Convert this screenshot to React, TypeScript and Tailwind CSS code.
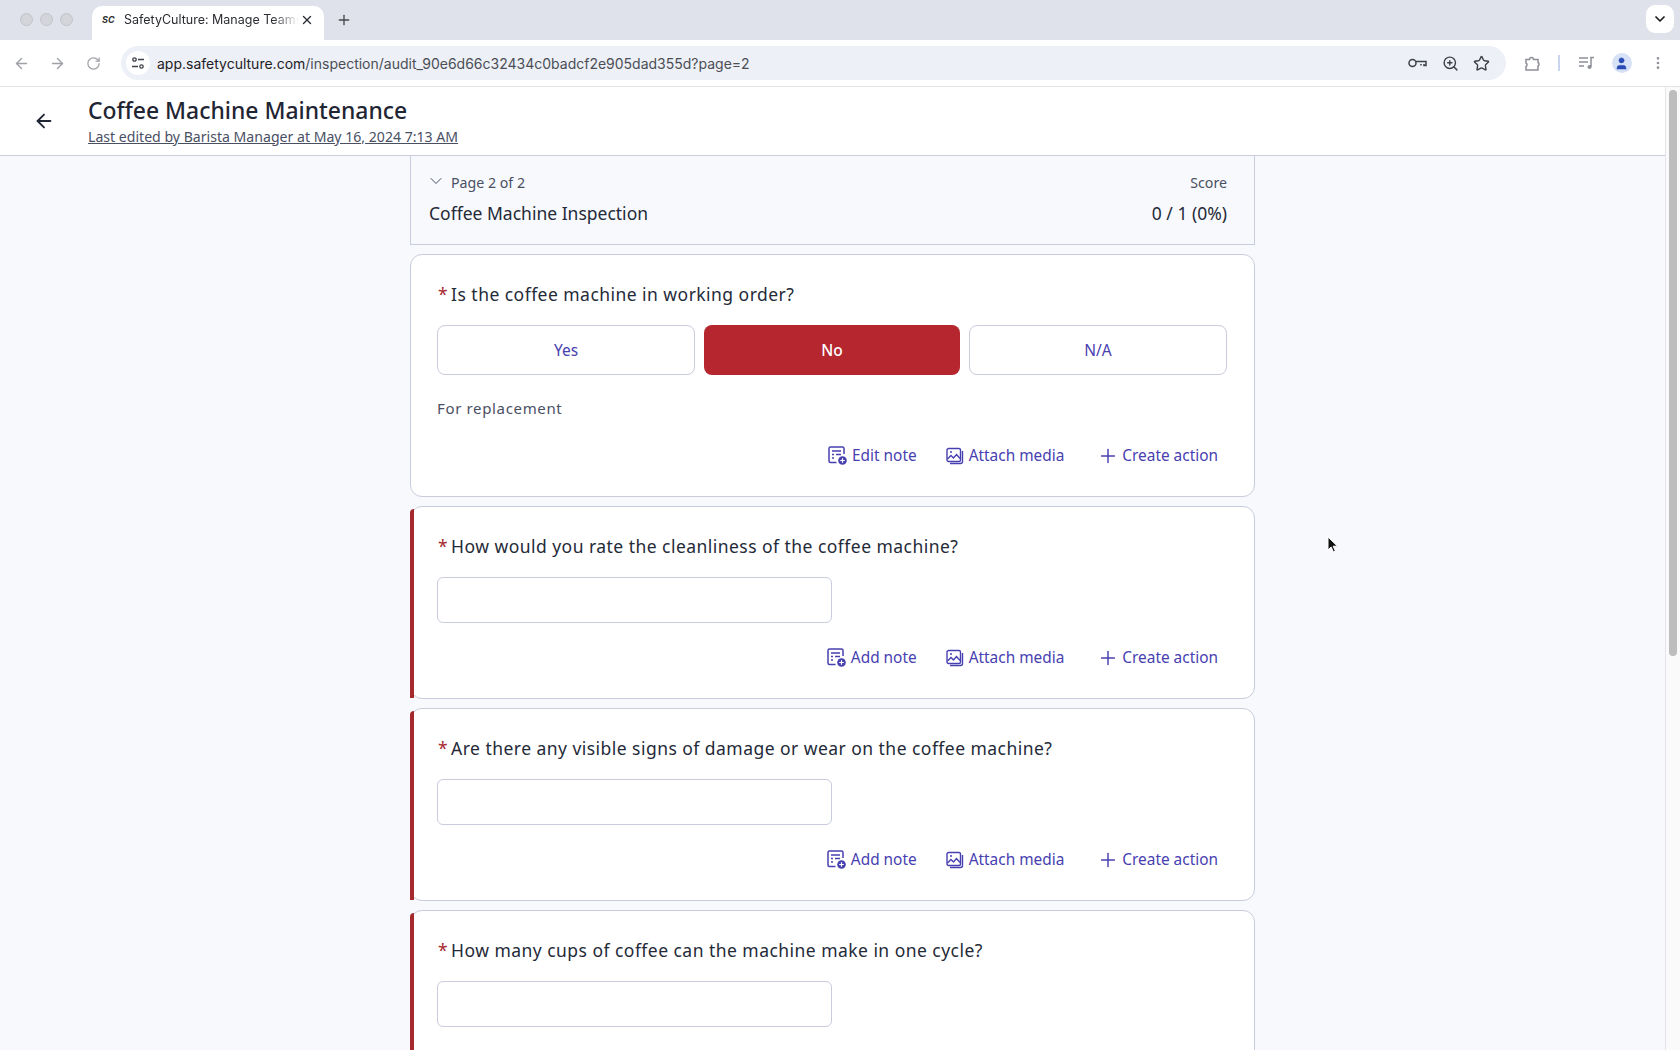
import { ArrowLeft, ArrowRight, ChevronDown, Plus, RotateCw, Star, X, ZoomIn, EllipsisVertical, User } from 'lucide-react';

const FONT = "font-['Noto_Sans',sans-serif]";

function NoteIcon() {
  return (
    <svg width="19" height="19" viewBox="0 0 19 19" fill="none" stroke="currentColor" strokeWidth="1.5">
      <path d="M8.5 16.5H2.5A1.5 1.5 0 0 1 1 15V2.5A1.5 1.5 0 0 1 2.5 1h12A1.5 1.5 0 0 1 16 2.5V8" />
      <path d="M4 5h9M4 8.5h2M8 8.5h5M4 12h2" />
      <circle cx="14.5" cy="14.5" r="4.3" fill="currentColor" stroke="none" />
      <path d="M14.5 12.2v4.6M12.2 14.5h4.6" stroke="#fff" strokeWidth="1.2" />
    </svg>
  );
}

function MediaIcon() {
  return (
    <svg width="18" height="18" viewBox="0 0 18 18" fill="none" stroke="currentColor" strokeWidth="1.4">
      <rect x="1" y="1.5" width="13.5" height="13" rx="1.5" />
      <path d="M1.5 12l3.5-3.5 2.5 2.5 3-3.5 3.5 4" />
      <circle cx="5" cy="5" r="1" fill="currentColor" stroke="none" />
      <path d="M16.5 4v10.5a2 2 0 0 1-2 2H4" />
    </svg>
  );
}

function ActionRow({ noteLabel }: { noteLabel: string }) {
  return (
    <div className="flex h-[36px] items-center justify-end pr-[9px] text-[15.4px] text-[#4740b0]">
      <span className="flex items-center gap-[5px]">
        <NoteIcon />
        {noteLabel}
      </span>
      <span className="ml-[29px] flex items-center gap-[5px]">
        <MediaIcon />
        Attach media
      </span>
      <span className="ml-[33px] flex items-center gap-[3px]">
        <Plus size={22} strokeWidth={1.6} />
        Create action
      </span>
    </div>
  );
}

function Question({ text }: { text: string }) {
  return (
    <p className="flex h-[24px] items-center text-[17.5px] tracking-[0.46px] text-[#242a38]">
      <span className="mr-[3px] ml-[1px] text-[#a5282e]">*</span>
      {text}
    </p>
  );
}

function TextQuestion({ text }: { text: string }) {
  return (
    <div className="relative rounded-[12px] border border-[#c8ccdc] bg-white pt-[27px] pr-[27px] pb-[22px] pl-[26px]">
      <div className="absolute top-[2px] bottom-0 -left-px w-[4px] rounded-tl-[4px] bg-[#a52a2e]" />
      <Question text={text} />
      <div className="mt-[19px] h-[46px] w-[395px] rounded-[6px] border border-[#c8ccdc] bg-white" />
      <div className="mt-[17px]">
        <ActionRow noteLabel="Add note" />
      </div>
    </div>
  );
}

function AnswerButton({ label, active }: { label: string; active?: boolean }) {
  return (
    <div
      className={
        active
          ? 'flex h-[50px] flex-1 items-center justify-center rounded-[8px] bg-[#b5262f] pt-[1px] text-[15.5px] font-medium text-white'
          : 'flex h-[50px] flex-1 items-center justify-center rounded-[8px] border border-[#c8ccdc] bg-white pt-[1px] text-[15.5px] text-[#4740b0]'
      }
    >
      {label}
    </div>
  );
}

function BrowserChrome() {
  return (
    <div className="shrink-0 font-['Inter',sans-serif]">
      {/* tab strip */}
      <div className="flex h-[40px] items-end bg-[#dfe2ea] pl-[20px]">
        <div className="mb-[14px] flex gap-[7px]">
          <span className="h-[13px] w-[13px] rounded-full border border-[#c2c4ca] bg-[#d3d5db]" />
          <span className="h-[13px] w-[13px] rounded-full border border-[#c2c4ca] bg-[#d3d5db]" />
          <span className="h-[13px] w-[13px] rounded-full border border-[#c2c4ca] bg-[#d3d5db]" />
        </div>
        <div className="ml-[19px] flex h-[34px] w-[232px] items-center rounded-t-[10px] bg-white pb-[6px] pl-[10px] text-[12.5px] text-[#2b2d33]">
          <span className="w-[22px] text-[9px] font-bold italic text-[#333]">SC</span>
          <span className="w-[175px] overflow-hidden whitespace-nowrap [mask-image:linear-gradient(to_right,black_85%,transparent)]">
            SafetyCulture: Manage Teams and Inspections
          </span>
          <X size={14} strokeWidth={2.4} className="ml-[1px] text-[#2b2d33]" />
        </div>
        <Plus size={16} strokeWidth={2} className="mb-[12px] ml-[12px] text-[#44474d]" />
        <div className="mr-[6px] mb-[7px] ml-auto flex h-[28px] w-[28px] items-center justify-center rounded-[9px] bg-white">
          <ChevronDown size={16} strokeWidth={2.6} className="text-[#1f1f1f]" />
        </div>
      </div>
      {/* toolbar */}
      <div className="flex h-[47px] items-start border-b border-[#e3e4e8] bg-white pt-[6px]">
        <div className="flex h-[34px] w-[121px] items-center pl-[13px] text-[#9ea1a7]">
          <ArrowLeft size={17} />
          <ArrowRight size={17} className="ml-[19px]" />
          <RotateCw size={15} className="ml-[20px]" />
        </div>
        <div className="flex h-[34px] w-[1385px] items-center rounded-full bg-[#edf0f7] pr-[16px] pl-[5px] text-[#3e4147]">
          <span className="flex h-[24px] w-[24px] items-center justify-center rounded-full bg-white">
            <svg width="14" height="14" viewBox="0 0 14 14" fill="none" stroke="#3e4147" strokeWidth="1.3">
              <circle cx="3.5" cy="3.5" r="1.7" />
              <path d="M7 3.5h6M1 10.5h6" />
              <circle cx="10.5" cy="10.5" r="1.7" />
            </svg>
          </span>
          <span className="ml-[7px] text-[14px] whitespace-nowrap text-[#1f2024]">
            app.safetyculture.com<span className="text-[#4b4e55]">/inspection/audit_90e6d66c32434c0badcf2e905dad355d?page=2</span>
          </span>
          <span className="ml-auto flex items-center gap-[13px]">
            <svg width="19" height="12" viewBox="0 0 19 12" fill="none" stroke="#3e4147" strokeWidth="1.5">
              <circle cx="4.5" cy="6" r="3.5" />
              <path d="M8 4.5h10v4h-2V7M13 7v1.5" />
            </svg>
            <ZoomIn size={17} strokeWidth={2} className="ml-[2px]" />
            <Star size={17} strokeWidth={2} className="ml-[1px]" />
          </span>
        </div>
        <div className="flex h-[34px] flex-1 items-center pl-[17px] text-[#8d9096]">
          <svg className="ml-[1px]" width="17" height="17" viewBox="0 0 17 17" fill="none" stroke="currentColor" strokeWidth="1.5">
            <path d="M2 4.5h3.5a2 2 0 0 1 4 0H14v3a2 2 0 0 1 0 3.5V15H2v-3.5a2 2 0 0 0 0-3.5z" />
          </svg>
          <span className="ml-[17px] h-[16px] w-[1.5px] bg-[#c9d6ee]" />
          <svg className="ml-[18px]" width="17" height="14" viewBox="0 0 17 14" fill="none" stroke="currentColor" strokeWidth="1.5">
            <path d="M1 2h9M1 6h9M1 10h5" />
            <path d="M13 11V1.5h3" />
            <circle cx="11.5" cy="11" r="2" fill="currentColor" stroke="none" />
          </svg>
          <span className="ml-[17px] flex h-[20px] w-[20px] items-center justify-center rounded-full bg-[#d8e2f7] text-[#2a4ab5]">
            <User size={15} fill="currentColor" strokeWidth={1} />
          </span>
          <EllipsisVertical size={16} className="ml-[18px]" />
        </div>
      </div>
    </div>
  );
}

export default function App() {
  return (
    <div className={`relative flex h-[1050px] w-[1680px] flex-col overflow-hidden bg-white ${FONT}`}>
      <BrowserChrome />
      <div className="flex min-h-0 flex-1">
        <div className="flex min-w-0 flex-1 flex-col">
          <header className="flex h-[69px] shrink-0 items-center border-b border-[#c8ccdc] bg-white pl-[33px]">
            <ArrowLeft size={22} strokeWidth={2} className="text-[#1f2533]" />
            <div className="ml-[33px] pb-[1px]">
              <h1 className="-mt-[1px] text-[22.9px] leading-[32px] font-medium text-[#1f2533]">Coffee Machine Maintenance</h1>
              <p className="mt-[1px] text-[14.1px] leading-[18px] text-[#4a5064] underline">
                Last edited by Barista Manager at May 16, 2024 7:13 AM
              </p>
            </div>
          </header>
          <main className="min-h-0 flex-1 overflow-hidden bg-[#f8f9fc]">
            <div className="mx-auto flex w-[845px] flex-col gap-[9px]">
              <section className="h-[89px] border-x border-b border-[#c8ccdc] pt-[15px] pr-[27px] pl-[18px]">
                <div className="flex h-[24px] items-center justify-between text-[14.2px] text-[#4a5064]">
                  <span className="flex items-center">
                    <ChevronDown size={20} strokeWidth={1.2} className="-mt-[3px] mr-[5px] -ml-[3px]" />
                    Page 2 of 2
                  </span>
                  <span>Score</span>
                </div>
                <div className="mt-[6px] flex h-[24px] items-center justify-between text-[17.5px] text-[#242a38]">
                  <span>Coffee Machine Inspection</span>
                  <span>0 / 1 (0%)</span>
                </div>
              </section>

              <section className="rounded-[12px] border border-[#c8ccdc] bg-white pt-[27px] pr-[27px] pb-[22px] pl-[26px]">
                <Question text="Is the coffee machine in working order?" />
                <div className="mt-[19px] flex gap-[9px]">
                  <AnswerButton label="Yes" />
                  <AnswerButton label="No" active />
                  <AnswerButton label="N/A" />
                </div>
                <p className="mt-[23px] h-[20px] text-[15px] leading-[20px] tracking-[0.65px] text-[#4a5064]">For replacement</p>
                <div className="mt-[20px]">
                  <ActionRow noteLabel="Edit note" />
                </div>
              </section>

              <TextQuestion text="How would you rate the cleanliness of the coffee machine?" />
              <TextQuestion text="Are there any visible signs of damage or wear on the coffee machine?" />
              <TextQuestion text="How many cups of coffee can the machine make in one cycle?" />
            </div>
          </main>
        </div>
        {/* scrollbar */}
        <div className="w-[15px] shrink-0 border-l border-[#e4e5e8] bg-[#fafafa] pt-[3px] pl-[3px]">
          <div className="h-[566px] w-[8px] rounded-full bg-[#bdbdbd]" />
        </div>
      </div>
      {/* mouse cursor */}
      <svg className="absolute top-[536px] left-[1327px]" width="12" height="18" viewBox="0 0 12 18">
        <path d="M1 1v13l3.2-3 2.2 5 2-.9-2.2-4.9H10.5z" fill="#111" stroke="#fff" strokeWidth="1" />
      </svg>
    </div>
  );
}
